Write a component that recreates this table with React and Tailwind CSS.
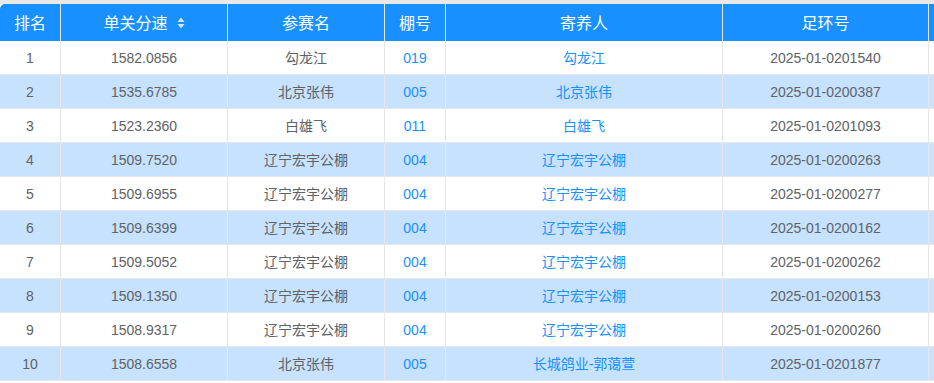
import React from 'react';

const rows = [
  ['1', '1582.0856', '勾龙江', '019', '勾龙江', '2025-01-0201540'],
  ['2', '1535.6785', '北京张伟', '005', '北京张伟', '2025-01-0200387'],
  ['3', '1523.2360', '白雄飞', '011', '白雄飞', '2025-01-0201093'],
  ['4', '1509.7520', '辽宁宏宇公棚', '004', '辽宁宏宇公棚', '2025-01-0200263'],
  ['5', '1509.6955', '辽宁宏宇公棚', '004', '辽宁宏宇公棚', '2025-01-0200277'],
  ['6', '1509.6399', '辽宁宏宇公棚', '004', '辽宁宏宇公棚', '2025-01-0200162'],
  ['7', '1509.5052', '辽宁宏宇公棚', '004', '辽宁宏宇公棚', '2025-01-0200262'],
  ['8', '1509.1350', '辽宁宏宇公棚', '004', '辽宁宏宇公棚', '2025-01-0200153'],
  ['9', '1508.9317', '辽宁宏宇公棚', '004', '辽宁宏宇公棚', '2025-01-0200260'],
  ['10', '1508.6558', '北京张伟', '005', '长城鸽业-郭蔼萱', '2025-01-0201877'],
];

function SortIcon() {
  return (
    <svg width="8" height="12" viewBox="0 0 8 12" className="inline-block ml-[9px] -mt-[2px] align-middle">
      <path d="M4 0.5 L7.5 5 L0.5 5 Z" fill="#d6e6fb" />
      <path d="M4 11.5 L7.5 7 L0.5 7 Z" fill="#d6e6fb" />
    </svg>
  );
}

export default function App() {
  const th = 'h-[37px] p-0 pt-[2px] border-r border-[#e3e8ef] font-normal text-white text-[16px] text-center';
  const td = 'h-[34px] p-0 pt-[2px] border-r border-b border-[#e6e6e6] text-center text-[14px]';
  return (
    <div className="w-[934px] h-[383px] overflow-hidden bg-white" style={{ fontFamily: '"Liberation Sans", "Noto Sans CJK SC", sans-serif' }}>
      <div className="h-[4px] bg-[#e8e8e8]" />
      <table className="table-fixed border-separate border-spacing-0 w-[1030px]">
        <colgroup>
          <col className="w-[61px]" />
          <col className="w-[167px]" />
          <col className="w-[157px]" />
          <col className="w-[61px]" />
          <col className="w-[277px]" />
          <col className="w-[206px]" />
          <col className="w-[101px]" />
        </colgroup>
        <thead>
          <tr className="bg-[#1890ff]">
            <th className={`${th} rounded-tl-[5px]`}>排名</th>
            <th className={th}>单关分速<SortIcon /></th>
            <th className={th}>参赛名</th>
            <th className={th}>棚号</th>
            <th className={th}>寄养人</th>
            <th className={th}>足环号</th>
            <th className={th}></th>
          </tr>
        </thead>
        <tbody>
          {rows.map((r, i) => (
            <tr key={r[0]} className={i % 2 === 1 ? 'bg-[#c6e2ff]' : 'bg-white'}>
              <td className={`${td} text-[#606266]`}>{r[0]}</td>
              <td className={`${td} text-[#606266]`}>{r[1]}</td>
              <td className={`${td} text-[#606266]`}>{r[2]}</td>
              <td className={`${td} text-[#1890ff]`}>{r[3]}</td>
              <td className={`${td} text-[#1890ff]`}>{r[4]}</td>
              <td className={`${td} text-[#606266]`}>{r[5]}</td>
              <td className={td}></td>
            </tr>
          ))}
        </tbody>
      </table>
    </div>
  );
}
